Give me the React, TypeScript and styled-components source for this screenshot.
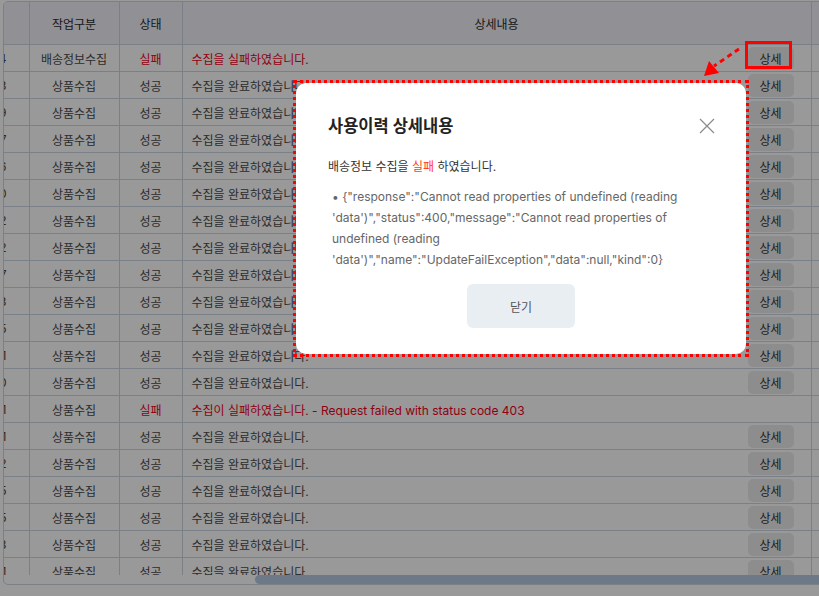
import { useLayoutEffect, useRef } from "react";
import styled, { createGlobalStyle } from "styled-components";

const GlobalStyle = createGlobalStyle`
  html, body {
    margin: 0;
    padding: 0;
    overflow: hidden;
    background: #ffffff;
  }
  body {
    font-family: Inter, "Noto Sans CJK KR", sans-serif;
    color: #333;
  }
`;

const Page = styled.div`
  padding: 1px 0 0 3px;
  width: 1000px;
`;

const TableWrap = styled.div`
  width: 900px;
  height: 584px;
  box-sizing: border-box;
  border: 1px solid #cbd5e1;
  border-radius: 5px;
  overflow: hidden;
  background: #fff;
  display: flex;
  flex-direction: column;
`;

const ScrollView = styled.div`
  flex: 1;
  min-height: 0;
  overflow: hidden;
`;

const ScrollTrack = styled.div`
  flex: none;
  height: 9px;
  display: flex;
`;

const ScrollThumb = styled.div<{ $offset: number; $size: number }>`
  margin-left: ${(p) => p.$offset}px;
  width: ${(p) => p.$size}px;
  height: 100%;
  border-radius: 5px;
  background: #b8cae2;
`;

const Table = styled.table`
  table-layout: fixed;
  width: 1361px;
  border-collapse: collapse;
  font-size: 12px;
`;

const Th = styled.th`
  height: 42px;
  padding: 0;
  background: #f0f0f8;
  border-right: 1px solid #cbd5e1;
  border-bottom: 1px solid #cbd5e1;
  font-weight: 400;
  color: #2a2a2a;
  text-align: center;
`;

const Td = styled.td<{ $align?: "left" | "center" | "right"; $red?: boolean }>`
  height: 26px;
  padding: 0;
  border-right: 1px solid #cbd5e1;
  border-bottom: 1px solid #cbd5e1;
  text-align: ${(p) => p.$align || "center"};
  color: ${(p) => (p.$red ? "#f2001c" : "#4a4a4a")};
  white-space: nowrap;
  overflow: hidden;
`;

const DateCell = styled(Td)`
  padding-right: 22px;
  color: #444;
`;

const DetailCell = styled.div`
  display: flex;
  align-items: center;
  justify-content: space-between;
  padding: 0 17px 0 9px;
`;

const DetailButton = styled.button`
  width: 46px;
  height: 23px;
  border: none;
  border-radius: 5px;
  background: #ececec;
  color: #333;
  font-family: inherit;
  font-size: 12px;
  padding: 0;
`;

const Dim = styled.div`
  position: fixed;
  inset: 0;
  background: rgba(0, 0, 0, 0.4);
  z-index: 10;
`;

const Frame = styled.div`
  position: fixed;
  left: 293px;
  top: 80px;
  border: 3px dotted #ff0000;
  z-index: 20;
`;

const Modal = styled.div`
  width: 450px;
  box-sizing: border-box;
  background: #fff;
  border-radius: 10px;
  padding: 30px 32px 26px;
  display: flex;
  flex-direction: column;
`;

const ModalHead = styled.div`
  display: flex;
  align-items: center;
  justify-content: space-between;
`;

const Title = styled.h2`
  margin: 0;
  font-size: 16.5px;
  line-height: 26px;
  font-weight: 700;
  color: #222;
`;

const CloseButton = styled.button`
  border: none;
  background: none;
  padding: 0;
  margin-right: -3px;
  width: 20px;
  height: 20px;
  display: flex;
  align-items: center;
  justify-content: center;
`;

const Message = styled.p`
  margin: 18px 0 0;
  font-size: 12px;
  line-height: 20px;
  color: #333;
`;

const Fail = styled.span`
  color: #ff3b1d;
`;

const ErrorList = styled.ul`
  margin: 9px 0 0;
  padding: 0 0 0 4px;
  list-style: none;
  font-size: 12px;
  line-height: 21px;
  color: #666;
`;

const ConfirmButton = styled.button`
  align-self: center;
  margin-top: 14px;
  width: 108px;
  height: 44px;
  border: none;
  border-radius: 6px;
  background: #e9eef3;
  color: #555;
  font-family: inherit;
  font-size: 12px;
`;

const Marker = styled.div`
  position: fixed;
  left: 745px;
  top: 41px;
  width: 47px;
  height: 28px;
  box-sizing: border-box;
  border: 3px solid #ff0000;
  z-index: 20;
`;

const Arrow = styled.svg`
  position: fixed;
  left: 698px;
  top: 44px;
  z-index: 20;
`;

type Row = {
  date: string;
  type: string;
  ok: boolean;
  msg: string;
  detail: boolean;
};

const ends = ["4", "3", "9", "7", "6", "0", "2", "2", "7", "3", "5", "1", "0", "1", "1", "2", "5", "5", "3", "1", "8", "4"];

const rows: Row[] = ends.map((d, i) => {
  if (i === 0)
    return { date: `2024-05-21 10:12:0${d}`, type: "배송정보수집", ok: false, msg: "수집을 실패하였습니다.", detail: true };
  if (i === 13)
    return {
      date: `2024-05-21 09:41:1${d}`,
      type: "상품수집",
      ok: false,
      msg: "수집이 실패하였습니다. - Request failed with status code 403",
      detail: false,
    };
  return { date: `2024-05-21 09:5${i % 10}:2${d}`, type: "상품수집", ok: true, msg: "수집을 완료하였습니다.", detail: true };
});

const widths = [50, 70, 140, 150, 90, 63, 629, 100, 69];
const TABLE_WIDTH = 1361;
const VIEW_WIDTH = 898;
const SCROLL_LEFT = 385;

const App = () => {
  const viewRef = useRef<HTMLDivElement>(null);

  useLayoutEffect(() => {
    if (viewRef.current) viewRef.current.scrollLeft = SCROLL_LEFT;
  }, []);

  const thumbOffset = Math.round((SCROLL_LEFT / TABLE_WIDTH) * VIEW_WIDTH) - 3;
  const thumbSize = Math.round((VIEW_WIDTH / TABLE_WIDTH) * VIEW_WIDTH);

  return (
    <>
      <GlobalStyle />
      <Page>
        <TableWrap>
          <ScrollView ref={viewRef}>
            <Table>
              <colgroup>
                {widths.map((w, i) => (
                  <col key={i} style={{ width: w }} />
                ))}
              </colgroup>
              <thead>
                <tr>
                  <Th>선택</Th>
                  <Th>No</Th>
                  <Th>쇼핑몰</Th>
                  <Th>사용일시</Th>
                  <Th>작업구분</Th>
                  <Th>상태</Th>
                  <Th>상세내용</Th>
                  <Th></Th>
                  <Th></Th>
                </tr>
              </thead>
              <tbody>
                {rows.map((r, i) => (
                  <tr key={i}>
                    <Td></Td>
                    <Td>{1043 - i}</Td>
                    <Td>스마트스토어</Td>
                    <DateCell $align="right">{r.date}</DateCell>
                    <Td>{r.type}</Td>
                    <Td $red={!r.ok}>{r.ok ? "성공" : "실패"}</Td>
                    <Td $align="left" $red={!r.ok}>
                      <DetailCell>
                        <span>{r.msg}</span>
                        {r.detail && <DetailButton>상세</DetailButton>}
                      </DetailCell>
                    </Td>
                    <Td></Td>
                    <Td></Td>
                  </tr>
                ))}
              </tbody>
            </Table>
          </ScrollView>
          <ScrollTrack>
            <ScrollThumb $offset={thumbOffset} $size={thumbSize} />
          </ScrollTrack>
        </TableWrap>
      </Page>

      <Dim />

      <Marker />
      <Arrow width="45" height="36" viewBox="0 0 45 36">
        <line x1="41" y1="5" x2="16" y2="22" stroke="#ff0000" strokeWidth="3" strokeDasharray="5 4" />
        <polygon points="6,32 11,17 21,29" fill="#ff0000" />
      </Arrow>

      <Frame>
        <Modal>
          <ModalHead>
            <Title>사용이력 상세내용</Title>
            <CloseButton aria-label="닫기">
              <svg width="16" height="16" viewBox="0 0 16 16">
                <path d="M1 1 L15 15 M15 1 L1 15" stroke="#8a8a8a" strokeWidth="1.2" />
              </svg>
            </CloseButton>
          </ModalHead>
          <Message>
            배송정보 수집을 <Fail>실패</Fail> 하였습니다.
          </Message>
          <ErrorList>
            <li>
              • {`{"response":"Cannot read properties of undefined (reading 'data')","status":400,"message":"Cannot read properties of undefined (reading 'data')","name":"UpdateFailException","data":null,"kind":0}`}
            </li>
          </ErrorList>
          <ConfirmButton>닫기</ConfirmButton>
        </Modal>
      </Frame>
    </>
  );
};

export default App;
